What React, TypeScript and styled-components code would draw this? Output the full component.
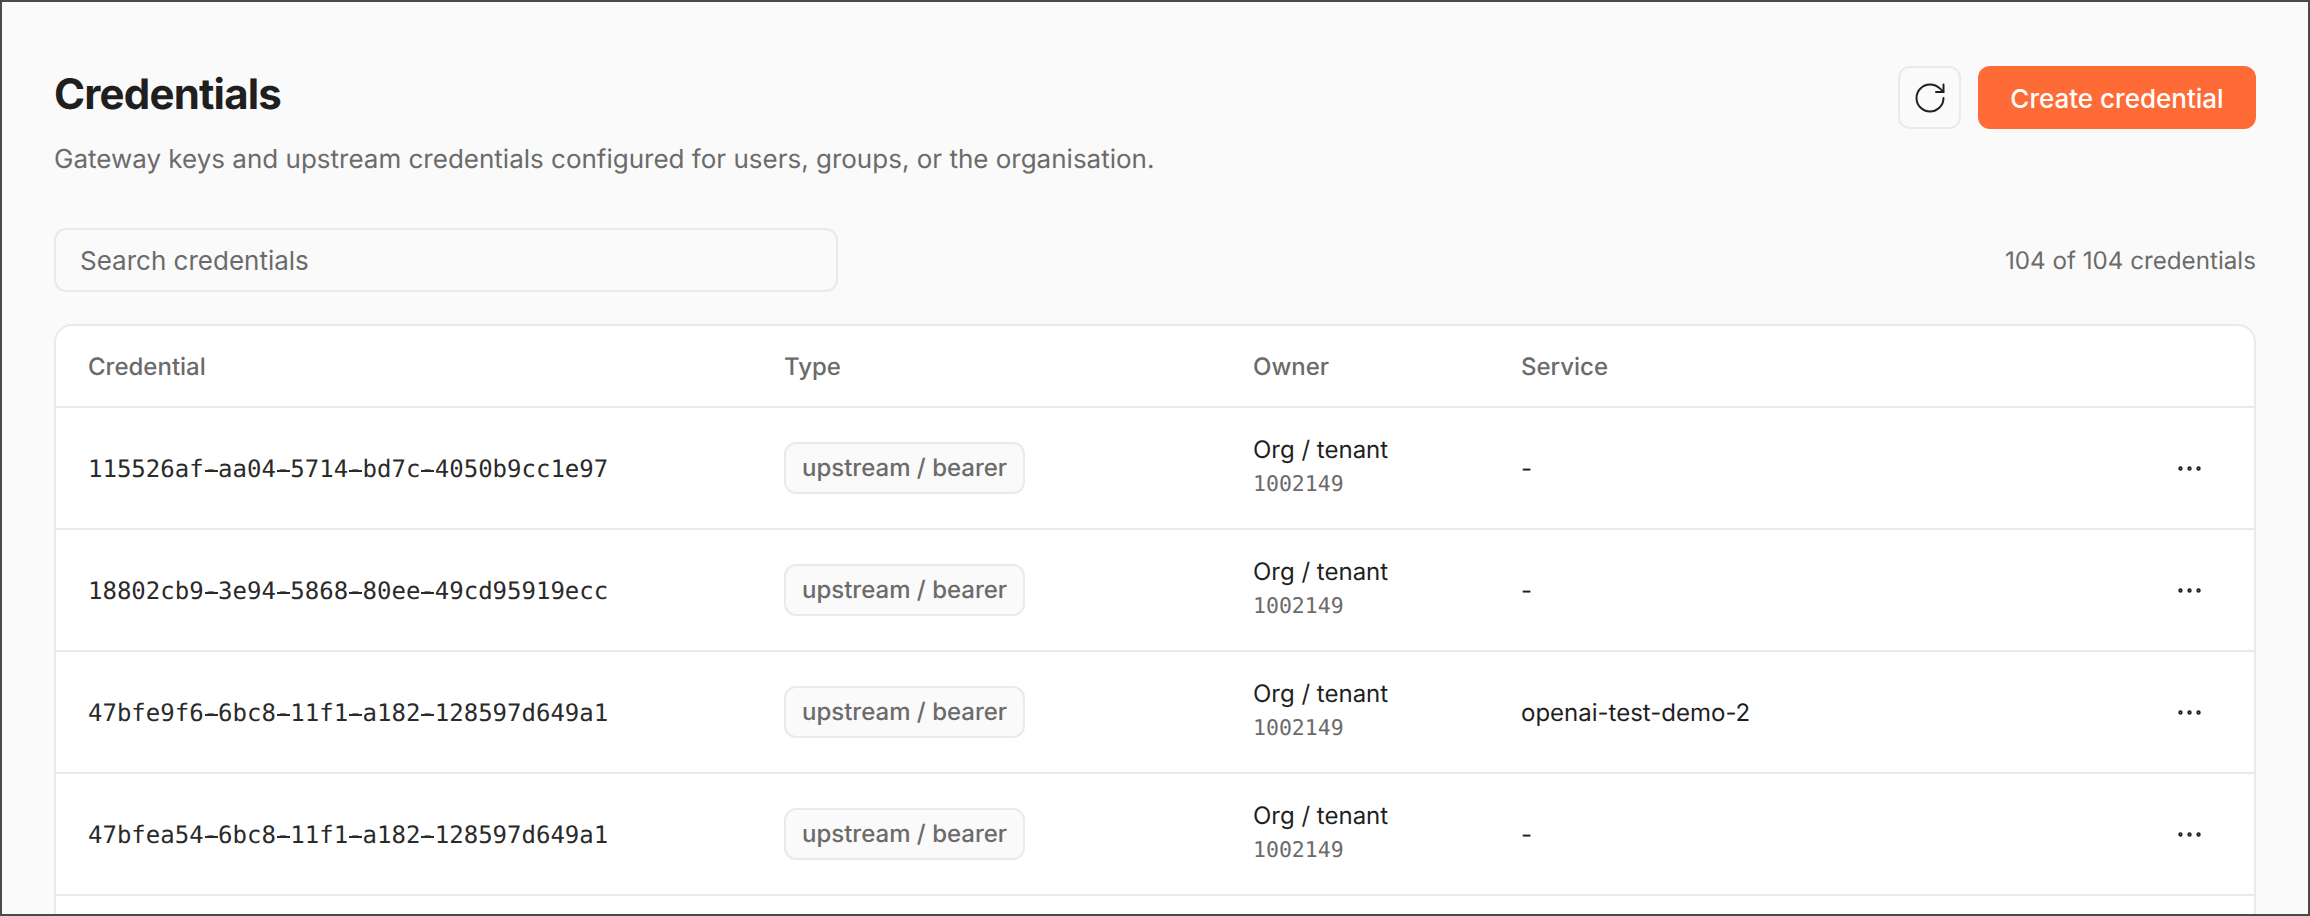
import React from 'react'
import styled, { createGlobalStyle } from 'styled-components'
import { Ellipsis, RotateCw } from 'lucide-react'

const COLORS = {
  PAGE: '#fafafa',
  WHITE: '#ffffff',
  BORDER: '#eaeaea',
  TEXT: '#1f1f1f',
  MUTED: '#6b6b6b',
  ACCENT: '#ff6b37',
  FRAME: '#4a4a4a',
}

const GRID_COLUMNS = '696px 469px 268px 1fr 130px'

const GlobalStyle = createGlobalStyle`
  html, body {
    margin: 0;
    height: 100%;
    overflow: hidden;
    background: ${COLORS.PAGE};
    text-rendering: geometricPrecision;
  }

  * {
    box-sizing: border-box;
  }
`

const Page = styled.div`
  display: flex;
  flex-direction: column;
  height: 916px;
  padding: 64px 52px 0;
  overflow: hidden;
  color: ${COLORS.TEXT};
  font-family: Inter, 'Liberation Sans', sans-serif;
  background: ${COLORS.PAGE};
  border: 2px solid ${COLORS.FRAME};
`

const Header = styled.header`
  display: flex;
  align-items: flex-start;
  justify-content: space-between;
`

const Title = styled.h1`
  margin: 0;
  font-weight: 700;
  font-size: 42px;
  line-height: 58px;
  letter-spacing: -0.8px;
`

const Subtitle = styled.p`
  margin: 19px 0 0;
  color: ${COLORS.MUTED};
  font-size: 26px;
  line-height: 34px;
`

const Actions = styled.div`
  display: flex;
  gap: 17px;
`

const IconButton = styled.button`
  display: flex;
  align-items: center;
  justify-content: center;
  width: 63px;
  height: 63px;
  padding: 0;
  color: ${COLORS.TEXT};
  background: ${COLORS.PAGE};
  border: 2px solid ${COLORS.BORDER};
  border-radius: 12px;
`

const PrimaryButton = styled.button`
  width: 278px;
  height: 63px;
  padding: 2px 0 0;
  color: ${COLORS.WHITE};
  font-weight: 500;
  font-size: 26px;
  font-family: inherit;
  background: ${COLORS.ACCENT};
  border: 0;
  border-radius: 12px;
`

const Toolbar = styled.div`
  display: flex;
  align-items: center;
  justify-content: space-between;
  margin-top: 51px;
`

const SearchInput = styled.input`
  width: 784px;
  height: 64px;
  padding: 0 24px;
  color: ${COLORS.TEXT};
  font-size: 26px;
  font-family: inherit;
  background: ${COLORS.PAGE};
  border: 2px solid ${COLORS.BORDER};
  border-radius: 12px;
  outline: none;

  &::placeholder {
    color: ${COLORS.MUTED};
    opacity: 1;
  }
`

const Count = styled.span`
  color: ${COLORS.MUTED};
  font-size: 24.2px;
`

const Card = styled.div`
  flex-shrink: 0;
  margin-top: 32px;
  padding-bottom: 60px;
  background: ${COLORS.WHITE};
  border: 2px solid ${COLORS.BORDER};
  border-radius: 18px;
`

const HeadRow = styled.div`
  display: grid;
  grid-template-columns: ${GRID_COLUMNS};
  align-items: center;
  height: 82px;
  color: ${COLORS.MUTED};
  font-weight: 500;
  font-size: 24px;
  border-bottom: 2px solid ${COLORS.BORDER};
`

const Row = styled.div`
  display: grid;
  grid-template-columns: ${GRID_COLUMNS};
  align-items: center;
  height: 122px;
  font-size: 24px;
  border-bottom: 2px solid ${COLORS.BORDER};
`

const Cell = styled.div`
  padding-left: 32px;
`

const CredentialId = styled.code`
  color: #2a2a2a;
  font-size: 24px;
  line-height: 28px;
  font-family: 'DejaVu Sans Mono', monospace;
`

// the reference's mono face draws a hyphen almost as wide as its cell
const IdDash = styled.span`
  position: relative;
  display: inline-block;

  &::after {
    position: absolute;
    top: 15px;
    left: 1px;
    width: 13px;
    height: 2px;
    background: currentColor;
    content: '';
  }
`

const TypeBadge = styled.span`
  display: inline-block;
  height: 52px;
  padding: 0 16px;
  color: ${COLORS.MUTED};
  font-weight: 500;
  font-size: 24px;
  line-height: 48px;
  background: ${COLORS.PAGE};
  border: 2px solid ${COLORS.BORDER};
  border-radius: 12px;
`

const OwnerName = styled.div`
  font-size: 24px;
  line-height: 34px;
`

const OwnerId = styled.div`
  margin: 3px 0 4px;
  color: ${COLORS.MUTED};
  font-size: 21.5px;
  line-height: 30px;
  font-family: 'DejaVu Sans Mono', monospace;
`

const RowActions = styled.div`
  display: flex;
  justify-content: center;
  color: ${COLORS.TEXT};
`

interface Credential {
  id: string
  service: string
}

const CREDENTIALS: Credential[] = [
  { id: '115526af-aa04-5714-bd7c-4050b9cc1e97', service: '-' },
  { id: '18802cb9-3e94-5868-80ee-49cd95919ecc', service: '-' },
  { id: '47bfe9f6-6bc8-11f1-a182-128597d649a1', service: 'openai-test-demo-2' },
  { id: '47bfea54-6bc8-11f1-a182-128597d649a1', service: '-' },
]

const renderId = (id: string) =>
  id.split('-').map((part, index) => (
    <React.Fragment key={part + index}>
      {index > 0 && <IdDash>-</IdDash>}
      {part}
    </React.Fragment>
  ))

const App: React.FC = () => (
  <>
    <GlobalStyle />
    <Page>
      <Header>
        <div>
          <Title>Credentials</Title>
          <Subtitle>
            Gateway keys and upstream credentials configured for users, groups, or the organisation.
          </Subtitle>
        </div>
        <Actions>
          <IconButton aria-label="Refresh">
            <RotateCw size={36} strokeWidth={1.3} />
          </IconButton>
          <PrimaryButton>Create credential</PrimaryButton>
        </Actions>
      </Header>

      <Toolbar>
        <SearchInput placeholder="Search credentials" />
        <Count>104 of 104 credentials</Count>
      </Toolbar>

      <Card>
        <HeadRow>
          <Cell>Credential</Cell>
          <Cell>Type</Cell>
          <Cell>Owner</Cell>
          <Cell>Service</Cell>
          <Cell />
        </HeadRow>

        {CREDENTIALS.map(credential => (
          <Row key={credential.id}>
            <Cell>
              <CredentialId>{renderId(credential.id)}</CredentialId>
            </Cell>
            <Cell>
              <TypeBadge>upstream / bearer</TypeBadge>
            </Cell>
            <Cell>
              <OwnerName>Org / tenant</OwnerName>
              <OwnerId>1002149</OwnerId>
            </Cell>
            <Cell>{credential.service}</Cell>
            <RowActions>
              <Ellipsis size={31} strokeWidth={1.4} />
            </RowActions>
          </Row>
        ))}
      </Card>
    </Page>
  </>
)

export default App
